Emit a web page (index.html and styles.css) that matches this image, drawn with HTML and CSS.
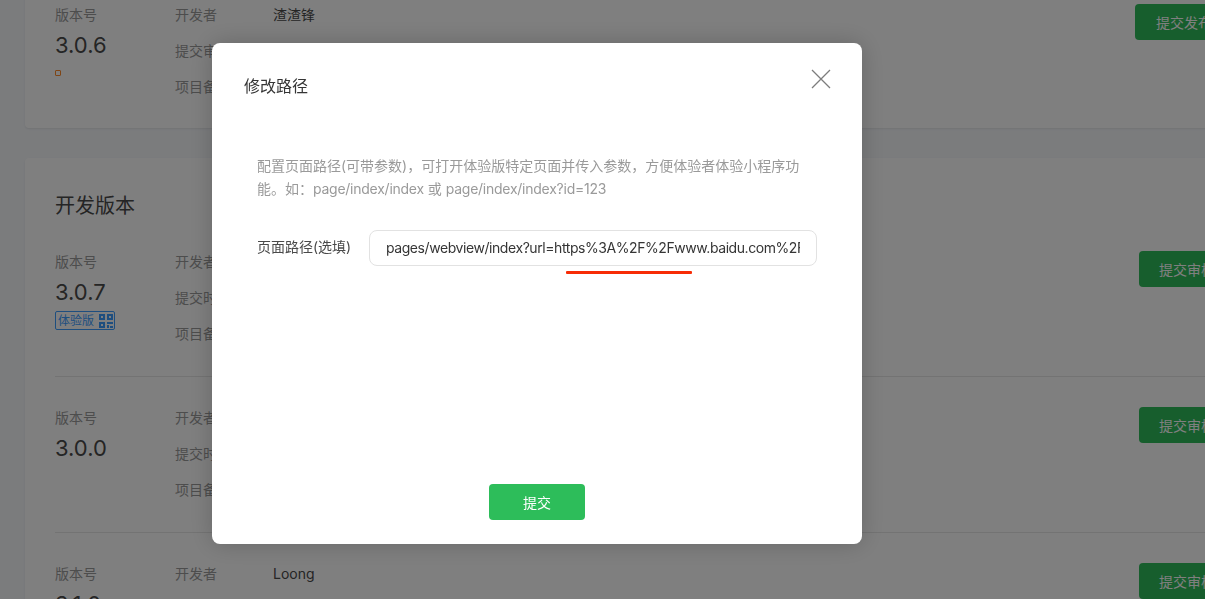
FILE: index.html
```html
<!DOCTYPE html>
<html lang="zh">
<head>
<meta charset="utf-8">
<title>修改路径</title>
<link rel="stylesheet" href="styles.css">
</head>
<body>
<main class="page">
  <section class="card">
    <div class="row row-first">
      <div class="version">
        <div class="label">版本号</div>
        <div class="number">3.0.6</div>
        <span class="dot-tag"></span>
      </div>
      <div class="meta">
        <div class="meta-line"><span class="label meta-key">开发者</span><span class="meta-val">渣渣锋</span></div>
        <div class="meta-line"><span class="label meta-key">提交审核时间</span></div>
        <div class="meta-line"><span class="label meta-key">项目备注</span></div>
      </div>
      <button class="action action-wide">提交发布</button>
    </div>
  </section>
  <section class="card">
    <h2 class="card-title">开发版本</h2>
    <div class="row">
      <div class="version">
        <div class="label">版本号</div>
        <div class="number">3.0.7</div>
        <span class="trial-tag">体验版
          <svg class="qr" viewBox="0 0 14 14" width="14" height="14"><path d="M0 0h6v6H0zM2 2v2h2V2zM8 0h6v6H8zM10 2v2h2V2zM0 8h6v6H0zM2 10v2h2v-2zM8 8h6v2H8zM8 11h2v3H8zM11 12h3v2h-3z" fill-rule="evenodd"/></svg>
        </span>
      </div>
      <div class="meta">
        <div class="meta-line"><span class="label meta-key">开发者</span></div>
        <div class="meta-line"><span class="label meta-key">提交时间</span></div>
        <div class="meta-line"><span class="label meta-key">项目备注</span></div>
      </div>
      <button class="action">提交审核</button>
    </div>
    <div class="row">
      <div class="version">
        <div class="label">版本号</div>
        <div class="number">3.0.0</div>
      </div>
      <div class="meta">
        <div class="meta-line"><span class="label meta-key">开发者</span></div>
        <div class="meta-line"><span class="label meta-key">提交时间</span></div>
        <div class="meta-line"><span class="label meta-key">项目备注</span></div>
      </div>
      <button class="action">提交审核</button>
    </div>
    <div class="row">
      <div class="version">
        <div class="label">版本号</div>
        <div class="number">3.1.0</div>
      </div>
      <div class="meta">
        <div class="meta-line"><span class="label meta-key">开发者</span><span class="meta-val">Loong</span></div>
      </div>
      <button class="action">提交审核</button>
    </div>
  </section>
</main>

<div class="overlay">
  <div class="dialog">
    <header class="dialog-head">
      <h3 class="dialog-title">修改路径</h3>
      <button class="close" aria-label="关闭">
        <svg viewBox="0 0 20 20" width="20" height="20"><path d="M1 1l18 18M19 1L1 19" fill="none" stroke="#7d7d7d" stroke-width="1.300"/></svg>
      </button>
    </header>
    <div class="dialog-body">
      <p class="hint">配置页面路径(可带参数)，可打开体验版特定页面并传入参数，方便体验者体验小程序功能。如：<span class="latin">page/index/index</span> 或 <span class="latin">page/index/index?id=123</span></p>
      <div class="field">
        <label class="field-label" for="path">页面路径(选填)</label>
        <div class="input-wrap">
          <input id="path" class="input" type="text" value="pages/webview/index?url=https%3A%2F%2Fwww.baidu.com%2Findex">
          <span class="underline"></span>
        </div>
      </div>
    </div>
    <footer class="dialog-foot">
      <button class="submit">提交</button>
    </footer>
  </div>
</div>
</body>
</html>
```

FILE: styles.css
```css
* { box-sizing: border-box; }

html, body {
  height: 100%;
  margin: 0;
  overflow: hidden;
}

body {
  background: #f6f8fb;
  color: #353535;
  font-family: Inter, "Noto Sans CJK SC", sans-serif;
  font-size: 14px;
}

.page {
  display: flex;
  flex-direction: column;
  gap: 30px;
  width: 1242px;
  margin: -26px 0 0 25px;
}

.card {
  background: #fff;
  border-radius: 4px;
  box-shadow: 0 1px 2px rgba(0, 0, 0, .08);
  padding: 0 30px;
}

.card-title {
  margin: 0;
  padding-top: 32px;
  height: 63px;
  font-size: 20px;
  line-height: 32px;
  font-weight: 400;
  color: #4a4a4a;
}

.row {
  display: flex;
  align-items: flex-start;
  height: 156px;
  padding-top: 30px;
  border-bottom: 1px solid #e7e7e7;
}

.row:last-child,
.row-first { border-bottom: 0; }

.row-first { height: 154px; }

.version {
  width: 120px;
  flex: none;
}

.label {
  color: #9a9a9a;
  line-height: 22px;
}

.number {
  margin-top: 8px;
  font-size: 22px;
  line-height: 22px;
  color: #4a4a4a;
}

.dot-tag {
  display: block;
  width: 6px;
  height: 6px;
  margin-top: 14px;
  border: 1px solid #ff8a2a;
  border-radius: 1px;
}

.trial-tag {
  display: inline-flex;
  align-items: center;
  gap: 5px;
  width: 60px;
  height: 19px;
  margin-top: 8px;
  padding-left: 2px;
  border: 1px solid #3d9dff;
  border-radius: 2px;
  color: #3d9dff;
  font-size: 12px;
  line-height: 17px;
  white-space: nowrap;
}

.qr { fill: #3d9dff; flex: none; }

.meta {
  display: flex;
  flex-direction: column;
  gap: 14px;
  flex: 1;
}

.meta-line {
  display: flex;
  line-height: 22px;
}

.meta-key { width: 98px; flex: none; }

.meta-val { color: #4a4a4a; }

.action {
  flex: none;
  width: 98px;
  height: 36px;
  border: 0;
  border-radius: 4px;
  background: #2fbd5b;
  color: #fff;
  font: inherit;
  text-align: left;
  padding-left: 20px;
  white-space: nowrap;
}

.action-wide {
  margin-right: 4px;
  padding-left: 21px;
}

.overlay {
  position: fixed;
  inset: 0;
  background: rgba(0, 0, 0, .5);
}

.dialog {
  display: flex;
  flex-direction: column;
  width: 650px;
  height: 501px;
  margin: 43px 0 0 212px;
  background: #fff;
  border-radius: 8px;
  box-shadow: 0 0 24px rgba(0, 0, 0, .2);
}

.dialog-head {
  display: flex;
  justify-content: space-between;
  align-items: flex-start;
  padding: 26px 31px 0 32px;
}

.dialog-title {
  margin: 0;
  padding-top: 4px;
  font-size: 16px;
  line-height: 26px;
  font-weight: 400;
  color: #353535;
}

.close {
  width: 20px;
  height: 20px;
  padding: 0;
  border: 0;
  background: none;
}

.close svg { display: block; }

.dialog-body {
  flex: 1;
  padding: 55px 45px 0;
}

.hint {
  margin: 0;
  color: #9a9a9a;
  line-height: 23px;
}

.latin { letter-spacing: -.25px; }

.field {
  display: flex;
  align-items: center;
  margin-top: 30px;
}

.field-label {
  width: 112px;
  flex: none;
  padding-bottom: 4px;
  color: #4a4a4a;
  white-space: nowrap;
}

.input-wrap {
  position: relative;
  flex: 1;
}

.input {
  display: block;
  width: 100%;
  height: 36px;
  padding: 0 16px 2px;
  border: 1px solid #e2e2e2;
  border-radius: 8px;
  background: #fff;
  color: #353535;
  font: inherit;
  letter-spacing: -.43px;
  outline: none;
}

.underline {
  position: absolute;
  left: 197px;
  top: 41px;
  width: 126px;
  height: 3px;
  background: #f72c06;
  border-radius: 1px;
}

.dialog-foot {
  display: flex;
  justify-content: center;
  padding-bottom: 24px;
}

.submit {
  width: 96px;
  height: 36px;
  border: 0;
  border-radius: 4px;
  background: #2dbd5a;
  color: #fff;
  font: inherit;
}
```
